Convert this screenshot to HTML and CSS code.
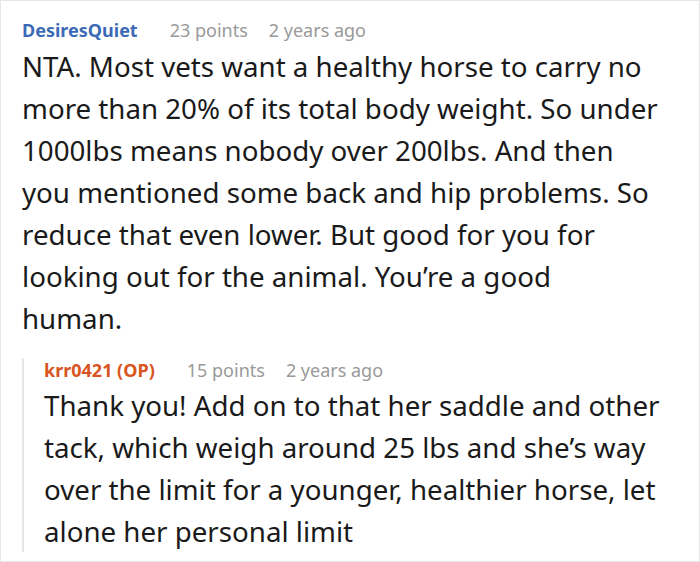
FILE: index.html
```html
<!DOCTYPE html>
<html>
<head>
<meta charset="utf-8">
<link rel="stylesheet" href="styles.css">
</head>
<body>
<div class="card">
  <div class="comment">
    <div class="meta">
      <span class="author">DesiresQuiet</span>
      <span class="points">23 points</span>
      <span class="time">2 years ago</span>
    </div>
    <p class="text">NTA. Most vets want a healthy horse to carry no more than 20% of its total body weight. So under 1000lbs means nobody over 200lbs. And then you mentioned some back and hip problems. So reduce that even lower. But good for you for looking out for the animal. You’re a good human.</p>
  </div>
  <div class="reply">
    <div class="meta">
      <span class="author op">krr0421 (OP)</span>
      <span class="points">15 points</span>
      <span class="time">2 years ago</span>
    </div>
    <p class="text">Thank you! Add on to that her saddle and other tack, which weigh around 25 lbs and she’s way over the limit for a younger, healthier horse, let alone her personal limit</p>
  </div>
</div>
</body>
</html>
```
FILE: styles.css
```css
html, body {
  margin: 0;
  padding: 0;
  background: #fff;
}
.card {
  box-sizing: border-box;
  width: 700px;
  height: 562px;
  border: 1px solid #e6e6e6;
  padding: 17px 34px 0 21px;
  overflow: hidden;
  font-family: "Noto Sans", "Open Sans", sans-serif;
  color: #1a1a1a;
}
.comment {
  padding-right: 7px;
}
.meta {
  display: flex;
  align-items: baseline;
  font-size: 18px;
  line-height: 24px;
  height: 24px;
  white-space: nowrap;
}
.author {
  font-weight: 700;
  color: #3b6bb6;
  margin-right: 32px;
}
.author.op {
  color: #d8551f;
}
.points {
  color: #999;
  margin-right: 21px;
}
.time {
  color: #999;
}
.text {
  margin: 3px 0 0 0;
  font-size: 27.7px;
  line-height: 42px;
}
.reply {
  margin-top: 29px;
  border-left: 2px solid #e6e6e6;
  padding-left: 20px;
}
.reply .meta {
  margin-top: -10px;
}
.reply .text {
  margin-top: 2px;
  margin-bottom: -8px;
}
```
